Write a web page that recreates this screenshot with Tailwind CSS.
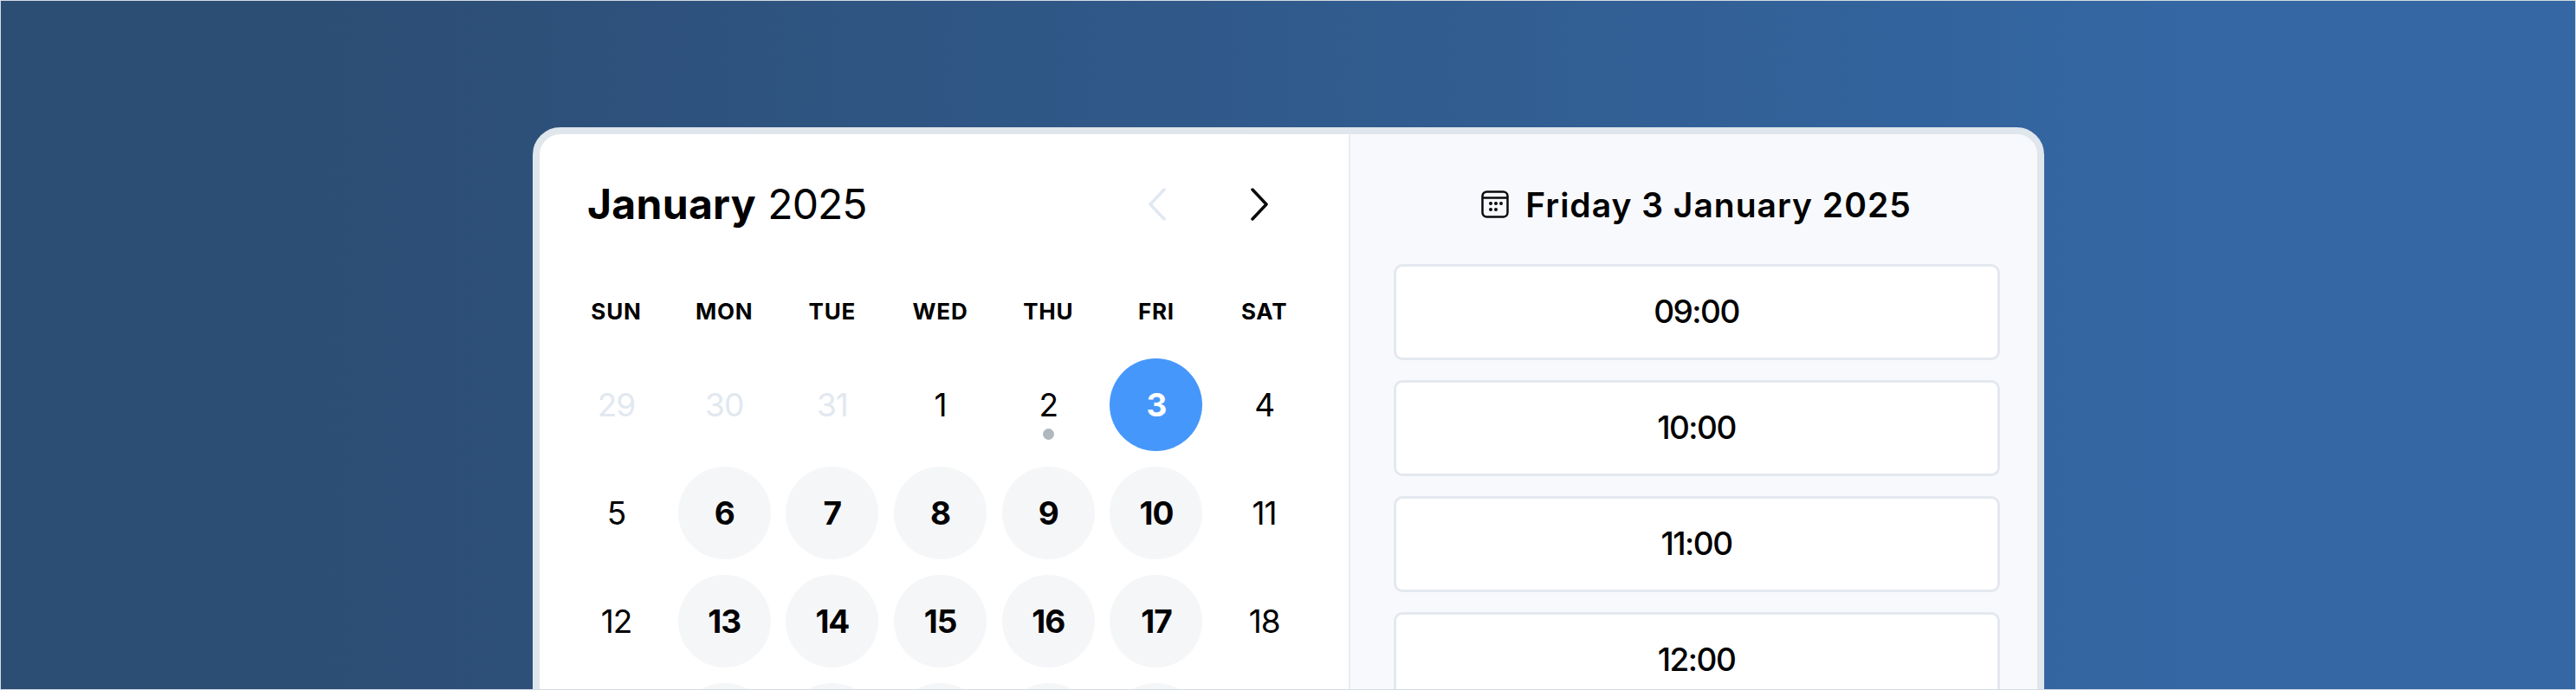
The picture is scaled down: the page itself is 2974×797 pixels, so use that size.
<!DOCTYPE html>
<html lang="en">
<head>
    <meta charset="UTF-8">
    <title>Booking calendar</title>
    <script src="https://cdn.jsdelivr.net/npm/@tailwindcss/browser@4"></script>
</head>
<body class="h-[797px] overflow-hidden font-['Inter',sans-serif] text-black">
    <div class="h-[797px] border border-[#d5dbe3] bg-linear-to-r from-[#2c4d74] from-12% to-[#3467a3] to-85% flex justify-center pt-[146px] overflow-hidden">
        <div class="w-[1745px] h-[800px] shrink-0 border-8 border-[#dfe6ec] rounded-t-[32px] overflow-hidden flex bg-white">
            <!-- calendar -->
            <div class="w-[936px] shrink-0 border-r-2 border-[#e9ecf3] pl-[35.5px]">
                <div class="flex items-center h-[162px] pl-[20px] pr-[93px]">
                    <h1 class="text-[48px] leading-none"><span class="font-bold tracking-[0.3px]">January</span> <span class="tracking-[-1px]">2025</span></h1>
                    <div class="ml-auto flex gap-[98px]">
                        <svg class="w-[20px] h-[40px]" viewBox="0 0 20 40" fill="none" stroke="#e2e8f0" stroke-width="3.5" stroke-linecap="round" stroke-linejoin="round"><path d="M18 3 2 20l16 17"/></svg>
                        <svg class="w-[20px] h-[40px]" viewBox="0 0 20 40" fill="none" stroke="#0a0a0a" stroke-width="3.5" stroke-linecap="round" stroke-linejoin="round"><path d="M2 3l16 17L2 37"/></svg>
                    </div>
                </div>
                <div class="grid grid-cols-[repeat(7,107px)] gap-x-[17.7px] text-center text-[26px] font-bold tracking-[0.8px] leading-none h-[97px] pt-[30px]">
                    <div>SUN</div><div>MON</div><div>TUE</div><div>WED</div><div>THU</div><div>FRI</div><div>SAT</div>
                </div>
                <div class="grid grid-cols-[repeat(7,107px)] auto-rows-[107px] gap-x-[17.7px] gap-y-[18px] text-[37px] tracking-[-1px] text-center">
                    <div class="flex items-center justify-center text-[#e2e8f0]">29</div>
                    <div class="flex items-center justify-center text-[#e2e8f0]">30</div>
                    <div class="flex items-center justify-center text-[#e2e8f0]">31</div>
                    <div class="flex items-center justify-center">1</div>
                    <div class="relative flex items-center justify-center">2<span class="absolute left-[47px] top-[81px] size-[13px] rounded-full bg-[#b1b7bf]"></span></div>
                    <div class="flex items-center justify-center rounded-full bg-[#4697fb] text-white font-bold">3</div>
                    <div class="flex items-center justify-center">4</div>

                    <div class="flex items-center justify-center">5</div>
                    <div class="flex items-center justify-center rounded-full bg-[#f5f6f8] font-bold">6</div>
                    <div class="flex items-center justify-center rounded-full bg-[#f5f6f8] font-bold">7</div>
                    <div class="flex items-center justify-center rounded-full bg-[#f5f6f8] font-bold">8</div>
                    <div class="flex items-center justify-center rounded-full bg-[#f5f6f8] font-bold">9</div>
                    <div class="flex items-center justify-center rounded-full bg-[#f5f6f8] font-bold">10</div>
                    <div class="flex items-center justify-center">11</div>

                    <div class="flex items-center justify-center">12</div>
                    <div class="flex items-center justify-center rounded-full bg-[#f5f6f8] font-bold">13</div>
                    <div class="flex items-center justify-center rounded-full bg-[#f5f6f8] font-bold">14</div>
                    <div class="flex items-center justify-center rounded-full bg-[#f5f6f8] font-bold">15</div>
                    <div class="flex items-center justify-center rounded-full bg-[#f5f6f8] font-bold">16</div>
                    <div class="flex items-center justify-center rounded-full bg-[#f5f6f8] font-bold">17</div>
                    <div class="flex items-center justify-center">18</div>

                    <div></div>
                    <div class="rounded-full bg-[#f5f6f8]"></div>
                    <div class="rounded-full bg-[#f5f6f8]"></div>
                    <div class="rounded-full bg-[#f5f6f8]"></div>
                    <div class="rounded-full bg-[#f5f6f8]"></div>
                    <div class="rounded-full bg-[#f5f6f8]"></div>
                    <div></div>
                </div>
            </div>
            <!-- time slots -->
            <div class="flex-1 bg-[#f8f9fc] pl-[50px] pr-[43px]">
                <div class="flex items-center justify-center gap-[19px] h-[150px] pt-[12px]">
                    <svg class="w-[32px] h-[32px]" viewBox="0 0 32 32" fill="none" stroke="#0a0a0a" stroke-width="2.5"><rect x="1.5" y="1.5" width="29" height="29" rx="5"/><path d="M1.5 8.5h29"/><g fill="#0a0a0a" stroke="none"><circle cx="11" cy="15" r="2"/><circle cx="17" cy="15" r="2"/><circle cx="23" cy="15" r="2"/><circle cx="11" cy="22" r="2"/><circle cx="17" cy="22" r="2"/></g></svg>
                    <h2 class="text-[39px] leading-none font-semibold tracking-[1px]">Friday 3 January 2025</h2>
                </div>
                <div class="flex flex-col gap-[23px]">
                    <button class="h-[111px] bg-white border-[3px] border-[#e4e8ef] rounded-[10px] text-[37px] tracking-[-1.5px] font-medium pb-[2px]">09:00</button>
                    <button class="h-[111px] bg-white border-[3px] border-[#e4e8ef] rounded-[10px] text-[37px] tracking-[-1.5px] font-medium pb-[2px]">10:00</button>
                    <button class="h-[111px] bg-white border-[3px] border-[#e4e8ef] rounded-[10px] text-[37px] tracking-[-1.5px] font-medium pb-[2px]">11:00</button>
                    <button class="h-[111px] bg-white border-[3px] border-[#e4e8ef] rounded-[10px] text-[37px] tracking-[-1.5px] font-medium pb-[2px]">12:00</button>
                </div>
            </div>
        </div>
    </div>
</body>
</html>
